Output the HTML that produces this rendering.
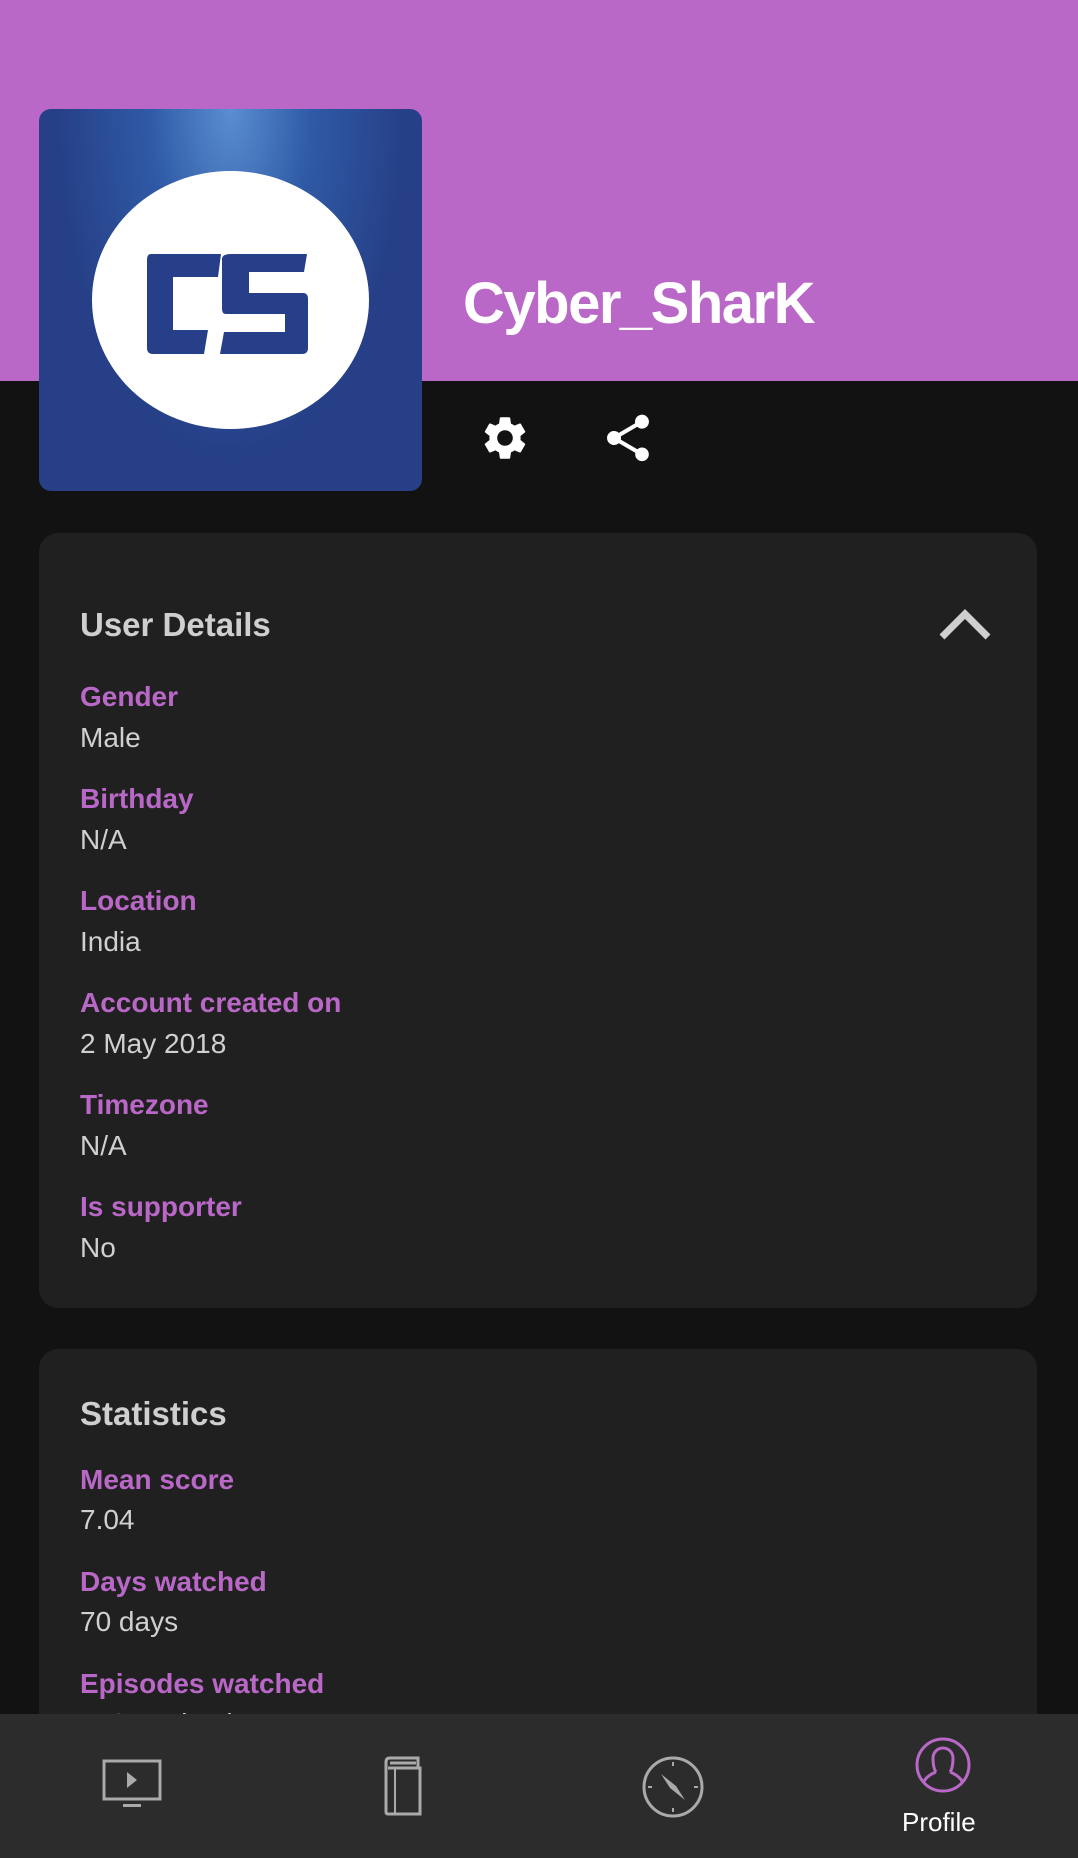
<!DOCTYPE html>
<html style="overflow:hidden;height:1858px"><head><meta charset="utf-8"><style>
*{margin:0;padding:0;box-sizing:border-box}
body{width:1078px;height:1858px;background:#121212;font-family:"Liberation Sans",sans-serif;position:relative;overflow:hidden}
.hdr{position:absolute;left:0;top:0;width:1078px;height:381px;background:#b968c7}
.av{position:absolute;left:39px;top:109px;width:383px;height:382px;border-radius:12px;overflow:hidden;background:radial-gradient(ellipse at 50% 0%,#5a8ed0 0%,#2f5aa6 30%,#263f86 65%)}
.circ{position:absolute;left:53px;top:62px;width:277px;height:258px;border-radius:50%;background:#fff}
.name{position:absolute;left:463px;top:270px;font-size:58px;font-weight:bold;color:#fff;letter-spacing:-1.5px}
.card{position:absolute;left:39px;width:998px;background:#202020;border-radius:19px}
.t{position:absolute;left:80px;font-size:33px;font-weight:bold;color:#cfcfcf}
.l{position:absolute;left:80px;font-size:28px;font-weight:bold;color:#b968c7}
.v{position:absolute;left:80px;font-size:28px;color:#d0d0d0}
.nav{position:absolute;left:0;top:1714px;width:1078px;height:144px;background:#2c2c2c}
</style></head><body>
<div class="hdr"></div>
<div class="av"><div class="circ"></div>
<svg style="position:absolute;left:0;top:0" width="383" height="382" viewBox="0 0 383 382"><path d="M112 145h70l-3 23h-45v53h35l-4 24h-51q-6 0-6-6v-88q0-6 4-6z" fill="#263f88"/><path d="M192 145h76l-3 18h-55v21h54q5 0 5 6v49q0 6-6 6h-82l4-22h61v-18h-59q-4 0-4-5v-50q0-5 9-5z" fill="#263f88"/></svg></div>
<div class="name">Cyber_SharK</div>
<svg style="position:absolute;left:479px;top:412px" width="52" height="52" viewBox="0 0 24 24"><path fill="#fff" d="M19.14 12.94c.04-.3.06-.61.06-.94s-.02-.64-.07-.94l2.030-1.58a.49.49 0 0 0 .12-.61l-1.92-3.32a.49.49 0 0 0-.59-.22l-2.39.96c-.5-.38-1.03-.7-1.620-.94l-.36-2.54a.48.48 0 0 0-.48-.41h-3.84c-.24 0-.43.17-.47.41l-.36 2.54c-.59.24-1.13.57-1.62.94l-2.39-.96a.48.48 0 0 0-.59.22L2.74 8.87c-.12.21-.08.47.12.61l2.03 1.58c-.05.3-.09.63-.09.94s.02.64.07.94l-2.03 1.58a.49.49 0 0 0-.12.61l1.92 3.32c.12.22.37.29.59.22l2.39-.96c.5.38 1.03.7 1.62.94l.36 2.54c.05.24.24.41.48.41h3.84c.24 0 .44-.17.47-.41l.36-2.54c.59-.24 1.13-.56 1.62-.94l2.39.96c.22.08.47 0 .59-.22l1.92-3.32c.12-.22.07-.47-.12-.61l-2.01-1.58zM12 15.6A3.6 3.6 0 1 1 12 8.4a3.6 3.6 0 0 1 0 7.2z"/></svg>
<svg style="position:absolute;left:600px;top:410px" width="56" height="56" viewBox="0 0 24 24"><path fill="#fff" d="M18 16.08c-.76 0-1.44.3-1.96.77L8.91 12.7c.05-.23.09-.46.09-.7s-.04-.47-.09-.7l7.05-4.11A2.99 2.99 0 1 0 15 5c0 .24.04.47.09.7L8.04 9.81A2.99 2.99 0 1 0 8.04 14.19l7.12 4.16c-.05.21-.08.43-.08.65A2.920 2.920 0 1 0 18 16.08z"/></svg>
<div class="card" style="top:533px;height:775px"></div>
<div class="t" style="top:606px">User Details</div>
<svg style="position:absolute;left:938px;top:606px" width="54" height="36" viewBox="0 0 54 36"><path d="M4 31L27 8l23 23" stroke="#cfcfcf" stroke-width="7" fill="none"/></svg>
<div class="l" style="top:681px">Gender</div><div class="v" style="top:722px">Male</div>
<div class="l" style="top:783px">Birthday</div><div class="v" style="top:824px">N/A</div>
<div class="l" style="top:885px">Location</div><div class="v" style="top:926px">India</div>
<div class="l" style="top:987px">Account created on</div><div class="v" style="top:1028px">2 May 2018</div>
<div class="l" style="top:1089px">Timezone</div><div class="v" style="top:1130px">N/A</div>
<div class="l" style="top:1191px">Is supporter</div><div class="v" style="top:1232px">No</div>
<div class="card" style="top:1349px;height:509px;border-radius:19px 19px 0 0"></div>
<div class="t" style="top:1395px">Statistics</div>
<div class="l" style="top:1464px">Mean score</div><div class="v" style="top:1504px">7.04</div>
<div class="l" style="top:1566px">Days watched</div><div class="v" style="top:1606px">70 days</div>
<div class="l" style="top:1668px">Episodes watched</div><div class="v" style="top:1708px">5785 episodes</div>
<div class="nav">
<svg style="position:absolute;left:100px;top:43px" width="64" height="56" viewBox="0 0 64 56"><rect x="4" y="4" width="56" height="38" fill="none" stroke="#aaa" stroke-width="3"/><path d="M27 15l10 8-10 8z" fill="#aaa"/><rect x="23" y="47" width="18" height="3" fill="#aaa"/></svg>
<svg style="position:absolute;left:378px;top:40px" width="50" height="64" viewBox="0 0 50 64"><path d="M8 8v50q0 2 2 2h32V14H10M8 8q0-4 4-4h28v10" fill="none" stroke="#aaa" stroke-width="3"/><path d="M12 9h26" stroke="#aaa" stroke-width="3"/><path d="M17 14v46" stroke="#aaa" stroke-width="2"/></svg>
<svg style="position:absolute;left:640px;top:40px" width="66" height="66" viewBox="0 0 66 66"><circle cx="33" cy="33" r="29" fill="none" stroke="#aaa" stroke-width="3"/><path d="M21 20l9 14 15 12-9-14z" fill="#aaa"/><path d="M33 8v4M33 54v4M8 33h4M54 33h4" stroke="#aaa" stroke-width="2"/></svg>
<svg style="position:absolute;left:914px;top:22px" width="58" height="58" viewBox="0 0 58 58"><circle cx="29" cy="29" r="26" fill="none" stroke="#b968c7" stroke-width="3"/><path d="M22 36q-10 4-13 11M36 36q10 4 13 11M22 36q-3-4-3-14a10 10 0 0 1 20 0q0 10-3 14" fill="none" stroke="#b968c7" stroke-width="3"/></svg>
<div style="position:absolute;left:902px;top:93px;font-size:26px;color:#fff">Profile</div>
</div>
</body></html>
